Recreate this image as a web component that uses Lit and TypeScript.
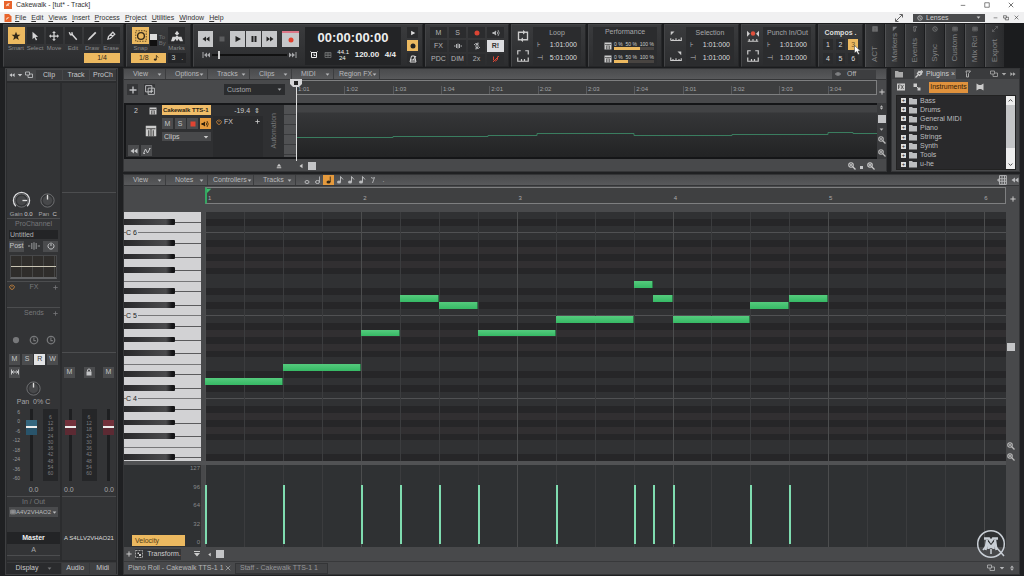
import { LitElement, html, svg, css, nothing } from "lit";
import { customElement } from "lit/decorators.js";
import { classMap } from "lit/directives/class-map.js";
import { styleMap } from "lit/directives/style-map.js";

const shapes: Record<string, unknown> = {
  star: svg`<path fill="currentColor" d="M8 1l2 5h5l-4 3.300 1.500 5.200L8 11.500l-4.500 3L5 9.300 1 6h5z"/>`,
  arrow: svg`<path fill="currentColor" d="M4 1l9 8-4 .5 2.500 4.500-2 1L7 10.500 4 13z"/>`,
  move: svg`<path fill="currentColor" d="M8 0l3 3H9v4h4V5l3 3-3 3V9H9v4h2l-3 3-3-3h2V9H3v2L0 8l3-3v2h4V3H5z"/>`,
  wrench: svg`<path fill="none" stroke="currentColor" stroke-width="2.400" d="M2 2l2 4 3 0 7 8M6 2l1 4"/>`,
  pencil: svg`<path fill="currentColor" d="M13 1l2 2L5 13l-4 2 2-4z"/>`,
  eraser: svg`<path fill="none" stroke="currentColor" stroke-width="2" d="M11 2l3 3-7 7-4 1 1-4zM7 5l4 4"/>`,
  gear: svg`<rect x="1" y="1" width="14" height="14" fill="none" stroke="currentColor" stroke-dasharray="2 1.500"/><circle cx="8" cy="8" r="4.500" fill="none" stroke="currentColor" stroke-width="1.800"/>`,
  marks: svg`<path fill="currentColor" d="M5 5l3-4 3 4-3 2zM0 15l2-6h4l2-2 2 2h4l2 6h-4l-2-3-2 3-2-3-2 3z"/>`,
  rew: svg`<path fill="currentColor" d="M8 3v10L1 8zM15 3v10L8 8z"/>`,
  left: svg`<path fill="currentColor" d="M12 2v12L4 8z"/>`,
  fwd: svg`<path fill="currentColor" d="M1 3v10l7-5zM8 3v10l7-5z"/>`,
  stop: svg`<path fill="currentColor" d="M3 3h10v10H3z"/>`,
  play: svg`<path fill="currentColor" d="M3 2v12l11-6z"/>`,
  pause: svg`<path fill="currentColor" d="M3 2h4v12H3zM9 2h4v12H9z"/>`,
  tostart: svg`<path fill="currentColor" d="M1 2h2v12H1zM10 3v10L4 8zM16 3v10l-6-5z"/>`,
  toend: svg`<path fill="currentColor" d="M13 2h2v12h-2zM6 3v10l6-5zM0 3v10l6-5z"/>`,
  dot: svg`<circle cx="8" cy="8" r="5" fill="currentColor"/>`,
  metro: svg`<path fill="none" stroke="currentColor" stroke-width="2" d="M5 2h6l3 12H2zM3 10h10M8 10l6-8"/>`,
  clock: svg`<path fill="none" stroke="currentColor" stroke-width="2" d="M3 3h10v10H3zM1 1l3 3M15 1l-3 3M8 5v4h3"/>`,
  lines: svg`<path fill="none" stroke="currentColor" stroke-width="1.500" d="M2 3h12v10H2zM2 6h12M2 9h12M8 3v10"/>`,
  loop: svg`<path fill="none" stroke="currentColor" stroke-width="1.800" d="M5 13H2V3h7M11 3h3v10H7"/><path fill="currentColor" d="M8 0l4 3-4 3zM8 10l-4 3 4 3z"/>`,
  range: svg`<path fill="none" stroke="currentColor" stroke-width="1.600" d="M1 6V1h4M11 1h4v5M1 10v5h14v-5M6 15v-3M10 15v-3"/>`,
  rangein: svg`<path fill="none" stroke="currentColor" stroke-width="1.500" d="M1 14h14v-4M4 14v-2M8 14v-3M12 14v-2M1 14v-3"/><path fill="currentColor" d="M1 2h5L1 7z"/>`,
  rangeout: svg`<path fill="none" stroke="currentColor" stroke-width="1.500" d="M1 10v4h14v-3M4 14v-2M8 14v-3M12 14v-2"/><path fill="currentColor" d="M15 2h-5l5 5z"/>`,
  punch: svg`<path fill="currentColor" d="M0 1l4 4-4 4zM16 1l-4 4 4 4z"/><path fill="none" stroke="currentColor" stroke-width="1.500" d="M1 15h14M3 15v-3M8 15v-3M13 15v-3"/><circle cx="8" cy="4.500" r="3" fill="#e0503c"/>`,
  wave: svg`<path fill="none" stroke="currentColor" stroke-width="2" d="M0 8h3M13 8h3M5 4v8M8 3v10M11 4v8"/>`,
  echo: svg`<path fill="currentColor" d="M1 6h3l4-3v10l-4-3H1z"/><path fill="none" stroke="currentColor" stroke-width="1.600" d="M10 5q3 3 0 6M12 2q5 6 0 12"/>`,
  swap: svg`<path fill="none" stroke="currentColor" stroke-width="2" d="M2 6q3-5 8-2M14 10q-3 5-8 2M4 8h8M10 1v4H6M6 15v-4h4"/>`,
  mute: svg`<path fill="none" stroke="currentColor" stroke-width="2" d="M3 3v7l4 2 4-3V3M2 14L14 2"/>`,
  plus: svg`<path fill="none" stroke="currentColor" stroke-width="2.600" d="M8 1v14M1 8h14"/>`,
  dup: svg`<path fill="none" stroke="currentColor" stroke-width="1.500" d="M1 1h10v10H1zM5 5h10v10H5zM10 7v6M7 10h6"/>`,
  keys: svg`<path fill="currentColor" d="M1 1h14v14H1z"/><path fill="none" stroke="#444" stroke-width="1.400" d="M2 5h12M5 7v8M8 5v10M11 7v8"/>`,
  env: svg`<path fill="none" stroke="currentColor" stroke-width="2" d="M1 13L5 4l4 8 5-9M12 3h3M1 13h3"/>`,
  power: svg`<path fill="none" stroke="currentColor" stroke-width="2" d="M5 3a6 6 0 1 0 6 0M8 1v7"/>`,
  lock: svg`<path fill="currentColor" d="M3 7h10v8H3z"/><path fill="none" stroke="currentColor" stroke-width="2" d="M5 7V3.500Q8 0 11 3.500V7"/>`,
  width: svg`<path fill="none" stroke="currentColor" stroke-width="2" d="M1 3v10M15 3v10M2 8h12M5 5L2 8l3 3M11 5l3 3-3 3"/>`,
  windows: svg`<path fill="none" stroke="currentColor" stroke-width="1.600" d="M1 2h8v6H1zM6 8v5h9V6H9"/>`,
  zoomout: svg`<circle cx="6" cy="6" r="4.500" fill="none" stroke="currentColor" stroke-width="2.200"/><path stroke="currentColor" stroke-width="2.800" d="M9 9l6 6M4 6h4"/>`,
  zoomin: svg`<circle cx="6" cy="6" r="4.500" fill="none" stroke="currentColor" stroke-width="2.200"/><path stroke="currentColor" stroke-width="2.400" d="M9 9l6 6M3.500 6h5M6 3.500v5"/>`,
  grid: svg`<path fill="none" stroke="currentColor" stroke-width="1.500" d="M4 1h11v14H4zM4 6h11M4 10h11M8 1v14M12 1v14"/><path fill="currentColor" d="M3 5v6L0 8z"/>`,
  folder: svg`<path fill="currentColor" d="M0 2h6l2 2h8v11H0z"/>`,
  plug: svg`<path fill="none" stroke="currentColor" stroke-width="2.600" d="M1 15l5-5M5 7l4 4 4-3-5-5zM10 4l4-3M12 6l4-3"/>`,
  note: svg`<path fill="none" stroke="currentColor" stroke-width="2" d="M4 2h9l-4 5v7H5V7z"/>`,
  fx: svg`<path fill="currentColor" d="M0 1h16v14H0z"/><path fill="none" stroke="#444" stroke-width="1.500" d="M3 12V4h4M3 8h3M8 4l5 8M13 4l-5 8"/>`,
  midifx: svg`<path fill="currentColor" d="M1 1h7v7H1zM9 9h6v6H9z"/><path stroke="currentColor" stroke-width="2" d="M6 6l5 5"/>`,
  bow: svg`<path fill="currentColor" d="M1 1l5 3h4l5-3v14l-5-3H6l-5 3z"/>`,
  expand: svg`<path fill="none" stroke="currentColor" stroke-width="1.500" d="M2 14L14 2M9 1h6v6M1 9v6h6"/>`,
  down: svg`<path fill="currentColor" d="M2 5h12l-6 7z"/>`,
  up: svg`<path fill="none" stroke="currentColor" stroke-width="3" d="M2 11l6-6 6 6"/>`,
  vee: svg`<path fill="none" stroke="currentColor" stroke-width="3" d="M2 5l6 6 6-6"/>`,
  eject: svg`<path fill="currentColor" d="M2 9l6-7 6 7zM2 11h12v3H2z"/>`,
  updown: svg`<path fill="currentColor" d="M3 7l5-6 5 6zM3 9h10l-5 6z"/>`,
  collapse: svg`<path fill="currentColor" d="M2 2h12v2H2zM2 6h12l-6 7z"/>`,
  frame: svg`<path fill="none" stroke="currentColor" stroke-width="1.500" stroke-dasharray="4 2" d="M1 1h14v14H1z"/><path fill="currentColor" d="M5 5h3v3H5zM8 8h4v4H8z"/>`,
  whole: svg`<ellipse cx="8" cy="12" rx="4" ry="3" fill="none" stroke="currentColor" stroke-width="2"/>`,
  half: svg`<ellipse cx="7" cy="12" rx="4" ry="3" fill="none" stroke="currentColor" stroke-width="2"/><path stroke="currentColor" stroke-width="1.800" d="M11 12V1"/>`,
  quarter: svg`<ellipse cx="7" cy="12" rx="4" ry="3" fill="currentColor"/><path stroke="currentColor" stroke-width="1.800" d="M10.500 12V1"/>`,
  eighth: svg`<ellipse cx="6" cy="12" rx="4" ry="3" fill="currentColor"/><path fill="none" stroke="currentColor" stroke-width="2" d="M9 12V1l5 6"/>`,
  rest: svg`<path fill="none" stroke="currentColor" stroke-width="1.800" d="M4 3q4 3 7 0L7 14"/>`,
  flag: svg`<path fill="currentColor" d="M2 2h12L2 14z"/>`,
  screw: svg`<circle cx="8" cy="8" r="6" fill="none" stroke="currentColor" stroke-width="2"/><path stroke="currentColor" stroke-width="2" d="M8 4v5h3"/>`,
  min: svg`<path stroke="currentColor" stroke-width="1.600" d="M2 9h12"/>`,
  max: svg`<path fill="none" stroke="currentColor" stroke-width="1.600" d="M2 2h12v12H2z"/>`,
  close: svg`<path stroke="currentColor" stroke-width="1.800" d="M2 2l12 12M14 2L2 14"/>`,
  app: svg`<path fill="#e8642c" d="M0 0h16v16H0z"/><path fill="#fbd9c6" d="M4 11q0-7 8-7l-3 4 2 3q-4-3-7 0z"/>`,
  doc: svg`<path fill="#e8642c" d="M1 0h9l5 5v11H1z"/><path fill="#fbd9c6" d="M4 12q0-6 7-6l-3 3z"/>`,
};

const icon = (name: string, cls = "i8") =>
  html`<svg class=${cls} viewBox="0 0 16 16" aria-hidden="true">${shapes[name]}</svg>`;

const PITCHES = ["C", "C#", "D", "D#", "E", "F", "F#", "G", "G#", "A", "A#", "B"];
const TOP_PITCH = 74;
const LANES = 36;
const lanes = Array.from({ length: LANES }, (_, i) => {
  const midi = TOP_PITCH - i;
  const name = PITCHES[midi % 12];
  return { name, octave: Math.floor(midi / 12), black: name.includes("#"), warm: name === "A" || name === "G" };
});

const BEATS = 20.56;
/* start beat, length in beats, lane from the top */
const notes = [
  [0, 2, 24], [2, 2, 22], [4, 1, 17], [5, 1, 12], [6, 1, 13], [7, 2, 17],
  [9, 2, 15], [11, 0.5, 10], [11.5, 0.5, 12], [12, 2, 15], [14, 1, 13], [15, 1, 12],
];
const pct = (beats: number) => `${((beats / BEATS) * 100).toFixed(3)}%`;
const beatLines = Array.from({ length: 21 }, (_, i) => i);
const moments = [1, 2, 3].flatMap((bar) => [1, 2, 3, 4].map((b) => `${bar}:0${b}`));

@customElement("app-root")
export class AppRoot extends LitElement {
  static styles = css`
    :host { display: flex; flex-direction: column; height: 100vh; overflow: hidden; background: #1f2022; color: #a6a7a9; font: 7px/10px "Liberation Sans", sans-serif; cursor: default; }
    *, *::before { box-sizing: border-box; }
    button, input, select { font: inherit; color: inherit; background: none; border: 0; padding: 0; margin: 0; border-radius: 0; min-width: 0; appearance: none; }
    button { display: flex; align-items: center; justify-content: center; white-space: nowrap; }
    svg { display: block; flex: none; }
    .i5 { width: 5px; height: 5px; } .i6 { width: 6px; height: 6px; } .i8 { width: 8px; height: 8px; } .i10 { width: 10px; height: 10px; } .i12 { width: 12px; height: 12px; }
    .row { display: flex; align-items: center; }
    .col { display: flex; flex-direction: column; }
    .grow { flex: 1; min-width: 0; min-height: 0; }
    .center { justify-content: center; }
    .line { border-top: 1px solid #4c4d4f; }

    .title { height: 12px; padding: 0 10px 3px 4px; gap: 4px; background: #fff; color: #333; flex: none; }
    .title .wins { gap: 18px; }
    .menu { height: 11px; padding: 0 5px 0 4px; background: #f0f0f1; color: #333; flex: none; }
    .menu nav { display: flex; gap: 5px; margin-left: 3px; }
    .menu .wins { gap: 5px; }
    .lens { height: 8px; width: 72px; background: #4a4b4d; color: #ccc; margin: 0 8px; padding: 0 4px; gap: 3px; }
    .lens select { flex: 1; line-height: 8px; }

    .bar { display: flex; gap: 2px; height: 45px; flex: none; padding: 1px 0 1px 3px; background: #1b1c1e; }
    .mod { background: linear-gradient(#3a3b3d, #2c2d2f); border: 1px solid #404143; border-color: #434446 #252628 #252628 #434446; padding: 2px 4px; flex: none; }
    .tools { width: 121px; padding: 2px 1px; } .snap { width: 65px; } .transport { width: 230px; padding: 2px 4px; gap: 6px; } .mix { width: 84px; } .span { width: 75px; } .perf { width: 74px; } .comp { width: 45px; }
    .tool { width: 19px; color: #8a8b8d; line-height: 9px; align-items: center; flex: none; font-size: 6px; }
    .tool button { width: 17px; height: 17px; background: #2a2b2d; color: #d5d5d6; }
    .tool .on, .on { background: #ecb960; color: #33291a; }
    .res { height: 10px; background: #ecb960; color: #33291a; width: 36px; margin-right: 2px; }
    .darkres { height: 10px; background: #242527; color: #ccc; padding: 0 3px; }
    .switch { width: 7px; height: 12px; background: linear-gradient(#ddd 50%, #111 50%); }
    .dim { color: #707173; font-size: 6px; line-height: 6px; }
    .tcol { gap: 3px; }
    .tbtns { gap: 1px; }
    .tbtns button { width: 15px; height: 16px; background: #c6c7c9; color: #222; }
    .tbtns .stop { background: none; color: #5c5d5f; }
    .tbtns .rec { width: 17px; margin-left: 4px; border-top: 2px solid #d78; color: #e2402c; }
    .seek { height: 8px; appearance: none; background: linear-gradient(#111, #111) center / 100% 2px no-repeat; }
    .seek::-webkit-slider-thumb { appearance: none; width: 2px; height: 8px; background: #ccc; }
    .time { background: #232426; width: 96px; padding: 0 5px; height: 38px; color: #eee; justify-content: space-evenly; }
    .time output { font: bold 13px/16px "Liberation Sans", sans-serif; text-align: center; white-space: nowrap; }
    .time .sub { font: bold 8px/10px "Liberation Sans", sans-serif; justify-content: space-between; }
    .time small { font-size: 6px; line-height: 6px; font-weight: normal; }
    .sidebtns { gap: 2px; } .sidebtns button { width: 11px; height: 11px; color: #ddd; background: #2a2b2d; }
    .sidebtns .on { background: #ecb960; color: #222; }
    .mixgrid { display: grid; grid-template-columns: repeat(4, 1fr); gap: 2px; height: 38px; }
    .mixgrid button { background: #2b2c2e; color: #b4b5b7; }
    .mixgrid .ri { background: #dcdde0; color: #333; font-weight: bold; } .red { color: #dc4534; }
    .span .icons { gap: 8px; width: 14px; color: #ccc; align-items: center; flex: none; }
    .box { background: #2b2c2e; height: 38px; padding: 0 4px; justify-content: space-around; }
    .box > div { display: flex; justify-content: space-between; }
    .span .box { margin-left: 3px; flex: 1; min-width: 0; color: #b8b9bb; }
    .box .val { color: #ddd; }
    .box h2 { margin: 0; font: inherit; text-align: center; color: #a6a7a9; white-space: nowrap; }
    .box .meterrow { align-items: center; gap: 2px; color: #ccc; padding-left: 8px; }
    .perf .box { justify-content: space-between; padding: 0 3px 2px; }
    .meter { height: 3px; background: #484441; } .meter i { display: block; height: 3px; background: #ecb960; }
    .ticks { font-size: 5px; line-height: 6px; display: flex; justify-content: space-between; white-space: nowrap; }
    .comp .sets { display: grid; grid-template-columns: repeat(3, 1fr); gap: 3px; } .comp .sets button { height: 11px; background: #2a2b2d; color: #ddd; position: relative; }
    .comp .sets .on { background: #ecb960; color: #6b532a; }
    .comp .head { height: 11px; font-weight: bold; color: #ddd; width: 100%; margin-bottom: 1px; }
    .cursor { position: absolute; left: 6px; top: 6px; width: 7px; height: 10px; z-index: 2; }
    .vtabs { display: flex; gap: 1px; flex: none; }
    .vtab { width: 19px; background: linear-gradient(90deg, #3a3b3d, #2a2b2d); border-left: 1px solid #505153; color: #808183; flex-direction: column; justify-content: space-between; padding: 2px 0 5px; }
    .vtab span { writing-mode: vertical-rl; transform: rotate(180deg); font-size: 8px; }

    .main { display: flex; flex: 1; min-height: 0; gap: 5px; padding: 0 4px 1px 5px; }
    .insp { width: 113px; flex: none; background: #2b2c2e; border: 1px solid #3f4042; padding: 0 1px; }
    .heads { height: 12px; background: #454648; gap: 1px; flex: none; color: #c8c9cb; }
    .heads button { background: #3a3b3d; height: 10px; flex: 1; }
    .heads .nav { width: 28px; flex: none; gap: 2px; background: none; }
    .strips { display: flex; flex: 1; gap: 2px; min-height: 0; margin: 2px 0; }
    .strip { flex: 1; background: #333436; min-width: 0; }
    .strip.a { flex: 0 0 53px; }
    .h109 { height: 109px; flex: none; }
    .knobs { height: 28px; justify-content: space-around; font-size: 6px; } .knob { align-items: center; line-height: 8px; }
    .knobs b { color: #ccc; font-weight: normal; }
    .kn { width: 19px; height: 19px; }
    .h4 { height: 5px; flex: none; } .h11 { height: 11px; flex: none; } .h12 { height: 12px; flex: none; } .h26 { height: 26px; flex: none; } .h28 { height: 28px; flex: none; } .h46 { height: 46px; flex: none; } .h14 { height: 14px; flex: none; }
    .faint { color: #77787a; }
    .amber { color: #e0923d; }
    .sends { padding-bottom: 4px; }
    .untitled { background: #232426; height: 9px; margin: 1px 2px; padding-left: 1px; color: #b0b1b3; }
    .sq { width: 11px; height: 11px; background: #4b4c4e; color: #c4c5c7; flex: none; }
    .sq.lit { background: #e2e3e5; color: #333; } .sq.wide { width: 15px; }
    .pad { padding: 0 2px; } .between { justify-content: space-between; }
    .eq { height: 24px; margin: 3px 3px 2px; flex: none; border: 1px solid #47484a; border-bottom: 2px solid #626365; background: linear-gradient(#c9c5b4, #c9c5b4) center / 100% 1px no-repeat, repeating-linear-gradient(90deg, #2f2d2b 0 10px, #464645 10px 11px); }
    .faders { height: 78px; flex: none; display: flex; justify-content: space-between; padding: 3px 2px; }
    .scale { width: 11px; font-size: 5px; line-height: 6px; text-align: right; justify-content: space-between; color: #9b9c9e; }
    .fader { writing-mode: vertical-lr; direction: rtl; width: 12px; height: 72px; background: linear-gradient(#1e1f21, #1e1f21) center / 3px 100% no-repeat; }
    .fader::-webkit-slider-thumb { appearance: none; width: 11px; height: 15px; background: linear-gradient(#73323c 6px, #eee 6px 8px, #5c2a33 8px); }
    .fader.blue::-webkit-slider-thumb { background: linear-gradient(#35677f 6px, #eee 6px 8px, #29546b 8px); }
    .vu { width: 15px; background: #252628; font-size: 5px; line-height: 6px; color: #7d7e80; text-align: center; padding: 5px 0; justify-content: space-between; }
    .pick { background: #4a4b4d; color: #b9babc; width: 100%; height: 10px; padding: 0 1px; }
    .pick select { flex: 1; line-height: 10px; font-size: 6px; }
    .mastername { background: #232426; color: #eee; font-weight: bold; height: 12px; flex: none; }
    .chan { color: #ddd; white-space: nowrap; height: 12px; flex: none; font-size: 6px; }
    .foot { height: 12px; background: #38393b; gap: 1px; flex: none; color: #c8c9cb; }
    .foot button { height: 11px; background: #3f4042; flex: 1; } .foot .disp { flex: 0 0 54px; gap: 9px; background: #2a2b2d; }

    .work { display: flex; flex-direction: column; flex: 1; min-width: 0; gap: 2px; }
    .upper { display: flex; height: 104px; gap: 4px; flex: none; }
    .pane { background: #48494b; border: 1px solid #343537; min-width: 0; }
    .mrow { height: 11px; background: linear-gradient(#4a4b4d, #58595b); color: #b8b9bb; flex: none; border-bottom: 1px solid #343537; }
    .mrow .m { width: 42px; height: 10px; padding: 0 3px 0 9px; justify-content: space-between; border-right: 1px solid #3c3d3f; }
    .mrow .m.l { width: 46px; padding-left: 5px; }
    .off { width: 44px; height: 9px; background: #3d3e40; gap: 6px; margin-right: 10px; }
    .off.off { justify-content: flex-start; padding-left: 3px; }
    .tv { display: grid; grid-template-columns: 172px minmax(0, 1fr) 9px; grid-template-rows: 23px 56px 13px; }
    .tbar { gap: 6px; padding: 0 0 4px 3px; } .tbar .sq { background: #353638; }
    .custom { background: #2b2c2e; height: 11px; width: 61px; margin-left: auto; margin-right: 11px; padding: 0 3px; }
    .ruler { border: 1px solid #7e7f80; border-width: 1px 1px 1px 0; margin-bottom: 8px; font-size: 6px; color: #a2a3a5; background: #3d3e3f; display: flex; position: relative; }
    .ruler span { flex: 1; border-left: 1px solid #5a5b5d; align-self: flex-end; line-height: 7px; height: 8px; padding-left: 1px; }
    .th { border: 1px solid #161719; border-width: 2px 0 2px 2px; background: #2f3032; display: flex; }
    .c1 { width: 33px; padding: 1px 2px; justify-content: space-between; color: #ccc; }
    .c1 .row { justify-content: space-between; padding-left: 4px; } .c1 .pair { padding: 0; gap: 2px; justify-content: flex-start; }
    .c2 { width: 51px; gap: 3px; margin-left: 3px; color: #ccc; }
    .name { height: 10px; background: #f0bd69; color: #2c2415; width: 49px; padding-left: 1px; font-size: 6px; font-weight: bold; }
    .sqs { width: 49px; justify-content: space-between; }
    .c2 .clips { background: #48494b; height: 9px; width: 49px; padding: 0 2px; } .c2 .clips select { line-height: 9px; flex: 1; }
    .sq.red { color: #e04432; } .sq.orange { background: #e59a3d; color: #33200a; }
    .c3 { width: 50px; color: #ccc; } .c3 .between { height: 11px; padding: 0 3px; }
    .fxbox { flex: 1; background: #2a2b2d; }
    .auto { flex: 1; align-items: center; justify-content: center; } .auto span { writing-mode: vertical-rl; transform: rotate(180deg); color: #77787a; line-height: 10px; }
    .lane3 { width: 12px; background: repeating-linear-gradient(#505153 0 9px, #3a3b3d 9px 10px); }
    .clip { border: 1px solid #141517; border-width: 2px 0; background: linear-gradient(#424345 0 7px, #353638 8px, #222324 100%); }
    .clip svg { width: 100%; height: 100%; }
    .vs { justify-content: space-around; align-items: center; color: #bbb; background: #3a3b3d; }
    .thumb { width: 8px; height: 8px; background: #c4c5c7; }
    .thumb.mini { width: 3px; height: 3px; align-self: flex-end; margin-bottom: 3px; }
    .hs { gap: 4px; padding: 0 2px; color: #ccc; }
    .play { position: absolute; left: 0; top: -2px; width: 1px; height: 82px; background: #ddd; z-index: 2; }
    .play svg { position: absolute; left: -6px; top: 0; width: 12px; height: 8px; }
    .addcol { color: #ccc; }

    .browser { width: 129px; flex: none; }
    .btabs { height: 10px; gap: 3px; color: #aaa; background: #3a3b3d; padding: 0 3px; flex: none; }
    .btabs .tab { height: 10px; background: #505153; width: 42px; gap: 3px; color: #ccc; margin-left: 8px; }
    .btool { height: 16px; gap: 8px; padding: 0 5px; color: #ccc; flex: none; } .btool .inst { background: #e0923d; color: #332008; width: 39px; height: 11px; }
    .tree { display: flex; flex: 1; min-height: 0; margin: 0 3px 1px 4px; background: #29292b; color: #bcbdbf; border: 1px solid #222; }
    .tree ul { list-style: none; margin: 0; padding: 0 0 0 4px; flex: 1; display: flex; flex-direction: column; overflow: hidden; }
    .tree li { flex: 1; display: flex; align-items: center; gap: 3px; min-height: 0; white-space: nowrap; }
    .tree li i { width: 5px; height: 5px; background: #ddd; color: #222; font: 6px/5px "Liberation Sans", sans-serif; text-align: center; }
    .tree .sb { width: 9px; background: linear-gradient(#eee 9px, #c4c5c7 9px 52px, #eee 52px); color: #444; justify-content: space-between; align-items: center; padding: 2px 0; }

    .roll { flex: 1; min-height: 0; position: relative; }
    .durs { margin-left: 5px; } .durs button { width: 11px; height: 10px; } .durs .on { background: #e59a3d; }
    .pr { display: grid; grid-template-columns: 81px minmax(0, 1fr) 13px; grid-template-rows: 26px minmax(0, 1fr) 4px 82px 14px; }
    .pr .bars { border: 1px solid #7e7f80; border-left: 2px solid #34a862; margin: 1px 0 8px; background: #3f4041; font-size: 6px; color: #aaa; position: relative; overflow: hidden; }
    .bars span { position: absolute; bottom: 1px; padding-left: 1px; line-height: 8px; }
    .bars svg { position: absolute; left: -1px; top: 0; color: #3abf6c; }
    .keys { background: #d2d2d4; margin-right: 4px; display: flex; flex-direction: column; overflow: hidden; }
    .key { flex: 1; position: relative; min-height: 0; }
    .key.black::before { content: ""; position: absolute; left: 0; right: 0; top: 3px; height: 1px; background: #5b5b5d; }
    .key.black i { position: absolute; left: 0; top: 0; width: 51px; bottom: 1px; background: linear-gradient(90deg, #29292b, #4a4a4c 42px, #151517 48px); border-radius: 0 1px 1px 0; }
    .key.edge { border-bottom: 1px solid #777779; }
    .key b { position: absolute; left: 2px; top: 2px; background: #d2d2d4; padding-right: 1px; font-weight: normal; color: #222; z-index: 1; }
    .canvas { position: relative; overflow: hidden; background: #303133; display: flex; flex-direction: column; }
    .lane { flex: 1; min-height: 0; background: #303133; } .lane.warm { background: #312f31; } .lane.black { background: #262628; } .lane.c { border-bottom: 1px solid #505153; }
    .beat { position: absolute; top: 0; bottom: 0; width: 1px; background: #3b3c3e; } .beat.bar1 { background: #4c4d4e; }
    .note { position: absolute; background: linear-gradient(#55cb7d, #36b965); border-right: 1px solid #2b7a48; }
    .vel { position: absolute; bottom: 3px; width: 2px; background: #7fdcb0; top: 20px; }
    .vels { background: #2f3133; }
    .vside { background: #2f3133; margin-right: 4px; display: flex; color: #88898b; font-size: 6px; }
    .vname { align-self: flex-end; background: #ecb960; color: #55401a; width: 53px; height: 11px; margin-left: 8px; margin-bottom: 1px; font-size: 7px; }
    .vname.vname { justify-content: flex-start; padding-left: 3px; }
    .vnums { margin-left: auto; justify-content: space-between; text-align: right; line-height: 7px; padding: 0 1px 1px 0; }
    .split { background: #515254; }
    .vs2 { align-items: center; color: #bbb; padding-right: 3px; gap: 3px; }
    .vs2 .above { flex: 3; } .vs2 .below { flex: 2; }
    .trans { gap: 3px; padding: 0 4px 0 2px; color: #ccc; }
    .trans .tr { background: #343537; height: 11px; width: 46px; gap: 4px; }
    .tabs { height: 13px; border-top: 1px solid #38393b; flex: none; color: #b6b7b9; padding-right: 4px; gap: 4px; }
    .tabs .t { height: 11px; padding: 0 0 0 4px; width: 107px; justify-content: space-between; } .tabs .t2.t2 { width: 93px; background: #424345; border: 1px solid #343537; color: #96979a; justify-content: flex-start; }
    .logo { position: absolute; right: 13px; bottom: 15px; width: 30px; height: 30px; color: #c9cfd6; }
  `;

  private menus(names: string[], longAt = -1) {
    return names.map((n, i) => html`<button class=${classMap({ m: true, l: i === longAt })}>${n}${icon("down", "i5")}</button>`);
  }

  private knob(angle: number, ring = false) {
    return html`<svg class="kn" viewBox="0 0 20 20" aria-hidden="true">
      ${ring ? svg`<path d="M4 16a8.500 8.500 0 1 1 12 0" fill="none" stroke="#dcdcde" stroke-width="1.400"/>` : nothing}
      <circle cx="10" cy="10" r="7" fill="#333436" stroke="#707173"/>
      <circle cx="10" cy="10" r="5" fill="#47484a"/>
      <path d="M10 9V4" stroke="#ddd" stroke-width="1.400" transform="rotate(${angle} 10 10)"/>
    </svg>`;
  }

  private spanModule(title: string, icons: string[], from: string, to: string) {
    return html`<section class="mod span row">
      <div class="col icons">${icons.map((n) => icon(n, "i12"))}</div>
      <div class="col box"><h2>${title}</h2><div><span>⊦</span><span class="val">${from}</span></div><div><span>⊣</span><span class="val">${to}</span></div></div>
    </section>`;
  }

  private controlBar() {
    const tools = [["Smart", "star"], ["Select", "arrow"], ["Move", "move"], ["Edit", "wrench"], ["Draw", "pencil"], ["Erase", "eraser"]];
    const mix = ["M", "S", icon("dot", "i8 red"), icon("echo"), "FX", icon("wave"), icon("swap"), "R!", "PDC", "DIM", "2x", icon("mute", "i8 red")];
    const side = [["ACT", "keys"], ["Markers", "flag"], ["Events", "note"], ["Sync", "screw"], ["Custom", "lines"], ["Mix Rcl", "lines"], ["Export", "expand"]];
    return html`<div class="bar">
      <section class="mod tools">
        <div class="row center">${tools.map(([t, n], i) => html`<div class="tool col"><button class=${i === 0 ? "on" : ""} aria-label=${t}>${icon(n, "i10")}</button><span>${t}</span></div>`)}</div>
        <div class="row"><span class="grow"></span><button class="res">1/4</button></div>
      </section>
      <section class="mod snap">
        <div class="row"><div class="tool col"><button class="on" aria-label="Snap">${icon("gear", "i12")}</button><span>Snap</span></div>
          <i class="switch"></i><div class="col dim"><span>&nbsp;To</span><span>&nbsp;By</span></div><span class="grow"></span>
          <div class="tool col"><button aria-label="Marks">${icon("marks", "i12")}</button><span>Marks</span></div></div>
        <div class="row between"><button class="res">1/8&nbsp;&nbsp;${icon("eighth", "i6")}</button><button class="darkres">3&nbsp;&nbsp;&nbsp;.</button></div>
      </section>
      <section class="mod transport row">
        <div class="col grow tcol">
          <div class="row tbtns"><button aria-label="Rewind">${icon("rew")}</button><button class="stop" aria-label="Stop">${icon("stop")}</button><button aria-label="Play">${icon("play")}</button><button aria-label="Pause">${icon("pause")}</button><button aria-label="Forward">${icon("fwd")}</button><button class="rec" aria-label="Record">${icon("dot")}</button></div>
          <div class="row">&nbsp;&nbsp;${icon("tostart", "i8")}&nbsp;<input class="seek grow" type="range" value="8" aria-label="Position">&nbsp;${icon("toend", "i8")}&nbsp;</div>
        </div>
        <div class="time col"><output>00:00:00:00</output><div class="sub row">${icon("clock")}${icon("lines", "i8 faint")}<small>44.1<br>&nbsp;24</small><span>120.00</span><span>4/4</span></div></div>
        <div class="col sidebtns"><button aria-label="Play mode">${icon("play", "i6")}</button><button class="on" aria-label="Record mode">${icon("dot")}</button><button aria-label="Metronome">${icon("metro")}</button></div>
      </section>
      <section class="mod mix"><div class="mixgrid">${mix.map((m, i) => html`<button class=${i === 7 ? "ri" : ""}>${m}</button>`)}</div></section>
      ${this.spanModule("Loop", ["loop", "range"], "1:01:000", "5:01:000")}
      <section class="mod perf"><div class="col box"><h2>Performance</h2>
        ${[65, 36].map((v) => html`<div class="meterrow">${icon("keys")}<div class="grow"><div class="ticks"><span>0 %</span><span>50 %</span><span>100 %</span></div><div class="meter"><i style=${styleMap({ width: v + "%" })}></i></div></div></div>`)}
      </div></section>
      ${this.spanModule("Selection", ["rangein", "rangeout"], "1:01:000", "1:01:000")}
      ${this.spanModule("Punch In/Out", ["punch", "range"], "1:01:000", "1:01:000")}
      <section class="mod comp"><button class="head">Compos&nbsp;.</button>
        <div class="sets">${[1, 2, 3, 4, 5, 6].map((n) => html`<button class=${n === 3 ? "on" : ""}>${n}${n === 3 ? html`<svg class="cursor" viewBox="0 0 14 20"><path d="M1 1v15l4-3 3 6 3-1-3-6h5z" fill="#fff" stroke="#333"/></svg>` : nothing}</button>`)}</div>
      </section>
      <div class="vtabs">${side.map(([t, n]) => html`<button class="vtab">${icon(n, "i6")}<span>${t}</span></button>`)}</div>
    </div>`;
  }

  private inspector() {
    const vu = html`<div class="vu col">${["6", "12", "18", "24", "30", "36", "42", "48", "54", "60"].map((n) => html`<span>${n}</span>`)}</div>`;
    return html`<aside class="insp col">
      <div class="heads row"><div class="nav row center">${icon("rew", "i6")}${icon("down", "i6")}${icon("windows")}</div><button>Clip</button><button>Track</button><button>ProCh</button></div>
      <div class="strips">
        <div class="strip a col">
          <div class="grow"></div>
          <div class="knobs row"><div class="knob col">${this.knob(90, true)}<span>Gain <b>0.0</b></span></div><div class="knob col">${this.knob(0)}<span>Pan&nbsp; <b>C</b></span></div></div>
          <div class="h11 row center faint line">ProChannel</div>
          <input class="untitled" value="Untitled" aria-label="Preset">
          <div class="h12 row between pad"><button class="sq wide">Post</button>${icon("wave", "i12 faint")}<button class="sq wide" aria-label="Power">${icon("power")}</button></div>
          <div class="eq"></div>
          <div class="h26 line pad"><div class="row between faint">${icon("power", "i6 amber")}<span>FX</span>${icon("plus", "i5")}</div></div>
          <div class="h46 line pad col between faint sends"><div class="row between"><span></span><span>&nbsp;&nbsp;&nbsp;Sends</span>${icon("plus", "i5")}</div><div class="row between h26 pad">${icon("dot", "i10")}${icon("screw", "i10")}${icon("screw", "i10")}</div></div>
          <div class="h12 row between pad"><button class="sq">M</button><button class="sq">S</button><button class="sq lit">R</button><button class="sq">W</button></div>
          <div class="h14 row pad"><button class="sq" aria-label="Interleave">${icon("width")}</button></div>
          <div class="knob col">${this.knob(0)}<span>Pan&nbsp; 0% C</span></div>
          <div class="faders"><div class="scale col">${["6", "0", "-6", "-12", "-18", "-24", "-36", "-60"].map((n) => html`<span>${n}</span>`)}</div><input class="fader blue" type="range" value="81" aria-label="Master volume">${vu}</div>
          <div class="h12 row center">0.0</div>
          <div class="h11 row center faint line">In / Out</div>
          <div class="h14 pad"><div class="pick row">${icon("lines", "i6")}<select aria-label="Output"><option>A4V2VHAO2</option></select>${icon("down", "i5")}</div></div>
          <div class="h11"></div>
          <div class="mastername row center">Master</div>
          <div class="h11 row center">A</div>
          <div class="h4 line"></div>
        </div>
        <div class="strip col">
          <div class="h109"></div>
          <div class="grow line"></div>
          <div class="h14 line"></div>
          <div class="h12 row between pad"><button class="sq">M</button><button class="sq" aria-label="Lock">${icon("lock")}</button><button class="sq">M</button></div>
          <div class="h28"></div>
          <div class="faders"><input class="fader" type="range" value="81" aria-label="Left volume">${vu}<input class="fader" type="range" value="81" aria-label="Right volume"></div>
          <div class="h12 row between pad"><span>0.0</span><span>0.0</span></div>
          <div class="h11 line"></div><div class="h14"></div><div class="h11"></div>
          <div class="chan row center">A S4LLV2VHAO21</div>
          <div class="h11"></div><div class="h4"></div>
        </div>
      </div>
      <div class="foot row"><button class="disp">Display ${icon("down", "i5 faint")}</button><button>Audio</button><button>Midi</button></div>
    </aside>`;
  }

  private tracks() {
    return html`<section class="pane grow">
      <div class="mrow row">${this.menus(["View", "Options", "Tracks", "Clips", "MIDI", "Region FX"], 5)}<span class="grow"></span><button class="off">${icon("wave", "i6")} Off</button></div>
      <div class="tv">
        <div class="tbar row"><button class="sq" aria-label="Add track">${icon("plus")}</button><button class="sq" aria-label="Duplicate">${icon("dup", "i10")}</button>
          <div class="custom row"><select class="grow" aria-label="Layout"><option>Custom</option></select>${icon("down", "i5")}</div></div>
        <div class="ruler">${moments.map((m) => html`<span>${m}</span>`)}<i class="play"><svg viewBox="0 0 12 8"><path d="M0 0h12v5l-3 3H3L0 5z" fill="#d4d4d6"/><path d="M4 2h4v4H4z" fill="#222"/></svg></i></div>
        <div class="row center addcol">${icon("plus", "i6")}</div>

        <div class="th">
          <div class="c1 col"><div class="row"><span>&nbsp;2</span>${icon("keys")}</div><div class="row"><span></span>${icon("keys", "i12")}</div><div class="row pair"><button class="sq" aria-label="Lanes">${icon("rew")}</button><button class="sq" aria-label="Automation">${icon("env")}</button></div></div>
          <div class="c2 col"><input class="name" value="Cakewalk TTS-1" aria-label="Track name">
            <div class="row sqs"><button class="sq">M</button><button class="sq">S</button><button class="sq red" aria-label="Arm">${icon("stop")}</button><button class="sq orange" aria-label="Input echo">${icon("echo")}</button></div>
            <div class="clips row"><select aria-label="Edit filter"><option>Clips</option></select>${icon("down", "i6")}</div></div>
          <div class="c3 col"><div class="row between"><span></span><span>-19.4 &nbsp;⇕</span></div><div class="fxbox"><div class="row between"><span class="row">${icon("power", "i6 amber")}&nbsp;FX</span>${icon("plus", "i5")}</div></div></div>
          <div class="auto row"><span>Automation</span></div>
          <div class="lane3"></div>
        </div>
        <div class="clip"><svg viewBox="0 0 581 52" preserveAspectRatio="none"><path fill="none" stroke="#3a7d5f" d="M0 32.500H97V31.500H192V30.500H241V28.500H338V30.500H436V29.500H532V27.500H557V28.500H581"/></svg></div>
        <div class="vs col">${icon("updown", "i5")}<i class="thumb"></i>${icon("down", "i5")}${icon("zoomout")}${icon("zoomin")}</div>

        <div class="row hs"><span class="grow"></span>${icon("eject", "i6")}<span>&nbsp;</span><span>&nbsp;</span></div>
        <div class="row hs">${icon("left", "i6")}<i class="thumb"></i><span class="grow"></span>${icon("zoomout")}<i class="thumb mini"></i>${icon("zoomin")}</div>
        <div></div>
      </div>
    </section>`;
  }

  private browser() {
    const items = ["Bass", "Drums", "General MIDI", "Piano", "Strings", "Synth", "Tools", "u-he"];
    return html`<section class="pane browser col">
      <div class="btabs row">${icon("folder")}<button class="tab">${icon("plug")}Plugins ×</button>&nbsp;${icon("note")}<span class="grow"></span>${icon("windows")}${icon("down", "i6")}${icon("fwd", "i6")}</div>
      <div class="btool row">${icon("fx")}${icon("midifx")}<button class="inst">Instruments</button>${icon("bow")}</div>
      <div class="tree"><ul>${items.map((t) => html`<li><i>+</i>${icon("folder")}${t}</li>`)}</ul><div class="sb col">${icon("up", "i5")}${icon("vee", "i5")}</div></div>
    </section>`;
  }

  private pianoRoll() {
    const durs = ["whole", "half", "quarter", "eighth", "eighth", "eighth", "rest"];
    const grid = beatLines.map((b) => html`<i class=${classMap({ beat: true, bar1: b % 4 === 0 })} style=${styleMap({ left: pct(b) })}></i>`);
    return html`<section class="pane roll col">
      <div class="mrow row">${this.menus(["View", "Notes", "Controllers", "Tracks"], 2)}<div class="durs row">${durs.map((d, i) => html`<button class=${i === 2 ? "on" : ""} aria-label="Note length ${i + 1}">${icon(d)}</button>`)}<button>.</button></div><span class="grow"></span>${icon("grid", "i10")}&nbsp;&nbsp;${icon("rew", "i8")}</div>
      <div class="pr grow">
        <div></div>
        <div class="bars">${icon("flag", "i6")}${[1, 2, 3, 4, 5, 6].map((n) => html`<span style=${styleMap({ left: pct((n - 1) * 4) })}>${n}</span>`)}</div>
        <div class="row center addcol">${icon("plus", "i6")}</div>

        <div class="keys">${lanes.map((l) => html`<div class=${classMap({ key: true, black: l.black, edge: l.name === "C" || l.name === "F" })}>${l.black ? html`<i></i>` : l.name === "C" ? html`<b>C ${l.octave}</b>` : nothing}</div>`)}</div>
        <div class="canvas">${lanes.map((l) => html`<div class=${classMap({ lane: true, black: l.black, warm: l.warm, c: l.name === "C" })}></div>`)}${grid}
          ${notes.map(([s, len, lane]) => html`<i class="note" style=${styleMap({ left: pct(s), width: pct(len), top: `${((lane / LANES) * 100).toFixed(3)}%`, height: `${(100 / LANES).toFixed(3)}%` })}></i>`)}</div>
        <div class="vs2 col"><span class="above"></span><i class="thumb"></i><span class="below"></span>${icon("zoomout")}${icon("zoomin")}</div>

        <div class="split"></div><div class="split"></div><div></div>

        <div class="vside"><button class="vname">Velocity</button><div class="vnums col"><span>127</span><span>96</span><span>64</span><span>32</span><span>0</span></div></div>
        <div class="canvas vels">${grid}${notes.map(([s]) => html`<i class="vel" style=${styleMap({ left: pct(s) })}></i>`)}</div>
        <div></div>

        <div class="trans row">${icon("plus", "i6")}<button class="tr">${icon("frame")}Transform.</button><span class="grow"></span>${icon("collapse")}</div>
        <div class="row hs">${icon("left", "i5")}<i class="thumb"></i></div>
        <div></div>
      </div>
      <div class="tabs row"><button class="t">Piano Roll - Cakewalk TTS-1 1${icon("close", "i6")}</button><button class="t t2">Staff - Cakewalk TTS-1 1</button><span class="grow"></span>${icon("windows")}${icon("down", "i6")}${icon("updown", "i6")}</div>
      <svg class="logo" viewBox="0 0 30 30" fill="none" stroke="currentColor"><circle cx="15" cy="15" r="13.300" stroke-width="1.500"/><path stroke-width="2.400" d="M8 9.500h5l2 3 2-3h5M11 11l-1.500 10M19 11l1.500 10M12.500 20v-5l2.500 3 2.500-3v5"/><path stroke-width="1.500" d="M10 17l-3 4M20 18l8 9M15 20v5"/></svg>
    </section>`;
  }

  render() {
    const menu = ["File", "Edit", "Views", "Insert", "Process", "Project", "Utilities", "Window", "Help"];
    return html`
      <header class="title row">${icon("app")}<span>Cakewalk - [tut* - Track]</span><span class="grow"></span><div class="wins row">${icon("min", "i6")}${icon("max", "i6")}${icon("close", "i6")}</div></header>
      <div class="menu row">${icon("doc")}<nav>${menu.map((m) => html`<button><u>${m[0]}</u>${m.slice(1)}</button>`)}</nav><span class="grow"></span>${icon("expand")}&nbsp;
        <div class="lens row">${icon("screw", "i6")}<select aria-label="Workspace"><option>Lenses</option></select>${icon("down", "i5")}</div><div class="wins row">${icon("min", "i5")}${icon("windows", "i6")}${icon("close", "i5")}</div></div>
      ${this.controlBar()}
      <main class="main">${this.inspector()}<div class="work"><div class="upper">${this.tracks()}${this.browser()}</div>${this.pianoRoll()}</div></main>`;
  }
}
